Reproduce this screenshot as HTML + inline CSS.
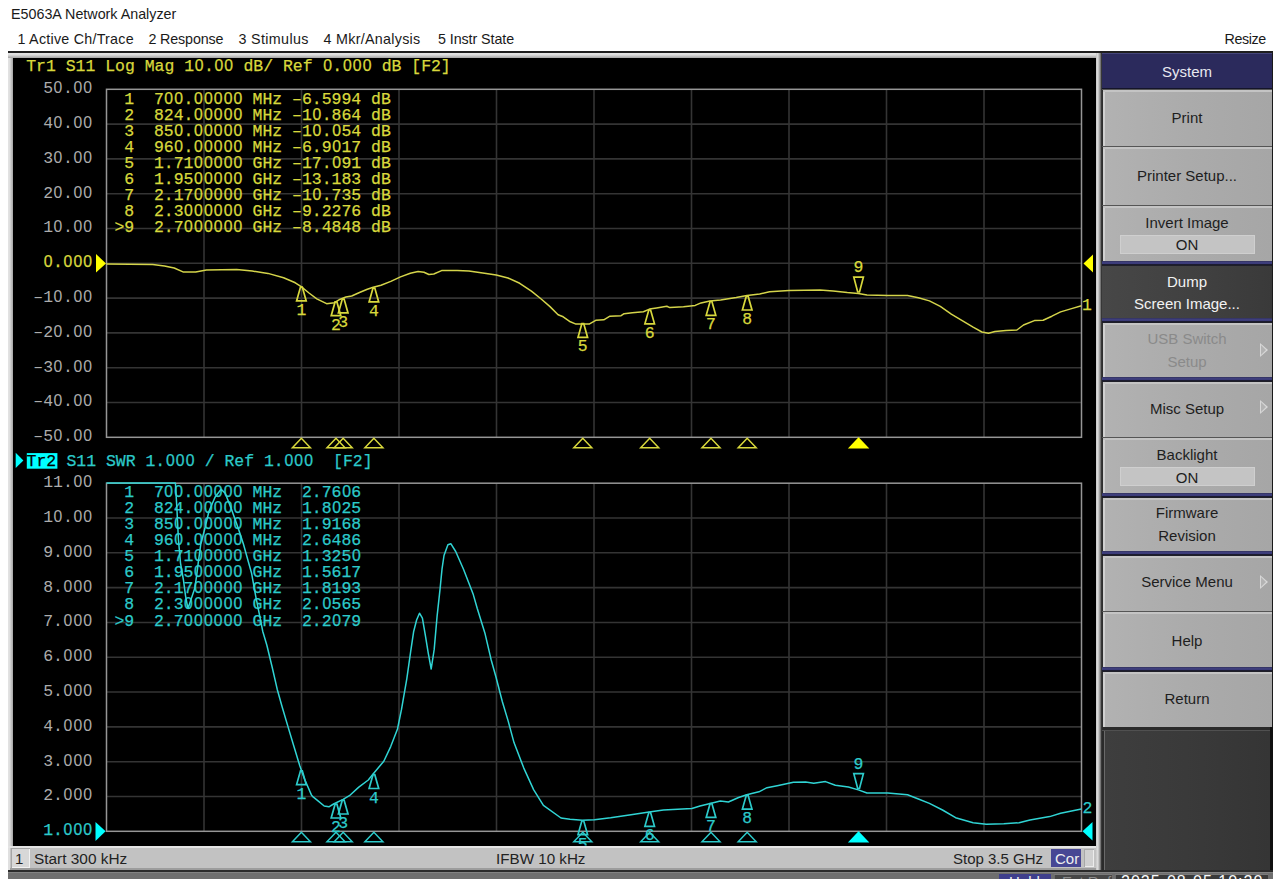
<!DOCTYPE html>
<html><head><meta charset="utf-8">
<style>
html,body{margin:0;padding:0;background:#fff;width:1280px;height:889px;overflow:hidden;position:relative;font-family:"Liberation Sans",sans-serif;}
.t{position:absolute;white-space:pre;line-height:1;color:#222;}
.sk{position:absolute;left:1102px;width:170px;background:linear-gradient(90deg,#b2b2b2 0%,#ababab 50%,#a6a6a6 100%);box-shadow:inset 1px 0 0 #2e2e2e,inset 0 2px 0 #c4c4c4,inset 3px 0 0 #d0d0d0;}
.sk .l{position:absolute;left:0;width:170px;text-align:center;font-size:15px;line-height:1;color:#1e1e1e;white-space:pre;}
.sep{position:absolute;left:1102px;width:170px;height:5px;background:linear-gradient(180deg,#2c2c50 0%,#40407e 20%,#3a3a78 55%,#1c1c30 70%,#202024 100%);}
.dk{position:absolute;left:1102px;width:170px;height:1px;background:#555;}
.fld{position:absolute;left:18px;width:135px;height:19px;background:#c4c4c4;box-shadow:inset 0 0 0 1px #cfcfcf;}
.arr{position:absolute;left:158px;width:0;height:0;border-top:7px solid transparent;border-bottom:7px solid transparent;border-left:8px solid #d8d8d8;}
.arr:after{content:"";position:absolute;left:-7px;top:-5px;border-top:5px solid transparent;border-bottom:5px solid transparent;border-left:5.5px solid #b3b3b3;}
</style></head><body>
<!-- title + menu -->
<div class="t" style="left:11px;top:6.5px;font-size:14.3px;color:#1a1a1a">E5063A Network Analyzer</div>
<div class="t" style="left:17.5px;top:32px;font-size:14.3px;letter-spacing:0.24px;color:#1a1a1a">1 Active Ch/Trace</div>
<div class="t" style="left:148.5px;top:32px;font-size:14.3px;letter-spacing:-0.15px;color:#1a1a1a">2 Response</div>
<div class="t" style="left:238.5px;top:32px;font-size:14.3px;letter-spacing:0.35px;color:#1a1a1a">3 Stimulus</div>
<div class="t" style="left:323.5px;top:32px;font-size:14.3px;letter-spacing:0.29px;color:#1a1a1a">4 Mkr/Analysis</div>
<div class="t" style="left:438px;top:32px;font-size:14.3px;letter-spacing:-0.08px;color:#1a1a1a">5 Instr State</div>
<div class="t" style="left:1224.5px;top:32px;font-size:14.3px;letter-spacing:-0.4px;color:#1a1a1a">Resize</div>

<!-- main frame -->
<div style="position:absolute;left:8px;top:51px;width:1265px;height:2px;background:#1e1e1e"></div>
<div style="position:absolute;left:8px;top:53px;width:1094px;height:817px;background:#d6d6d6"></div>
<div style="position:absolute;left:8px;top:53px;width:5px;height:793px;background:linear-gradient(90deg,#e4e4e4,#dedede 35%,#a4a4a4 100%)"></div>
<div style="position:absolute;left:8px;top:53px;width:1088px;height:5px;background:linear-gradient(180deg,#e4e4e4,#dedede 35%,#a4a4a4 100%)"></div>
<div style="position:absolute;left:1096px;top:53px;width:6px;height:817px;background:linear-gradient(90deg,#c8c8c8,#dcdcdc 30%,#8a8a8a 70%,#2a2a2a 95%)"></div>
<div style="position:absolute;left:1272px;top:53px;width:1px;height:826px;background:#1a1a1a"></div>

<!-- status bar -->
<div style="position:absolute;left:8px;top:846px;width:1088px;height:24px;background:#c2c2c2;box-shadow:inset 0 2px 0 #e4e4e4,inset 2px 0 0 #e0e0e0,inset 0 -2px 0 #9c9c9c"></div>
<div style="position:absolute;left:10.5px;top:848px;width:19px;height:19.5px;background:#d8d8d8;box-shadow:inset 1px 1px 0 #a6a6a6,inset -1px -1px 0 #f2f2f2"></div>
<div class="t" style="left:15px;top:851px;font-size:15px;color:#222">1</div>
<div class="t" style="left:34px;top:851px;font-size:15.4px;color:#222">Start 300 kHz</div>
<div class="t" style="left:496px;top:851px;font-size:15.2px;color:#222">IFBW 10 kHz</div>
<div class="t" style="left:953px;top:851px;font-size:15px;color:#222">Stop 3.5 GHz</div>
<div style="position:absolute;left:1051px;top:849px;width:30px;height:18px;background:#474794"></div>
<div class="t" style="left:1055px;top:851px;font-size:15px;color:#f0f0f0">Cor</div>
<div style="position:absolute;left:1084px;top:849px;width:10px;height:18px;background:#d0d0d0;box-shadow:inset 1px 1px 0 #a8a8a8,inset -1px -1px 0 #ececec"></div>
<div style="position:absolute;left:8px;top:870px;width:1265px;height:2px;background:#2a2a2a"></div>
<div style="position:absolute;left:8px;top:872px;width:1265px;height:7px;background:#6e6e6e;box-shadow:inset 0 1px 0 #828282"></div>
<div style="position:absolute;left:999px;top:874px;width:52px;height:5px;background:#3f3f8c;overflow:hidden"><div class="t" style="left:10px;top:0px;font-size:15px;color:#f0f0f0">Hold</div></div>
<div style="position:absolute;left:1054px;top:874px;width:58px;height:5px;background:#474747;box-shadow:inset 0 1px 0 #7a7a7a,inset 1px 0 0 #6a6a6a;overflow:hidden"><div class="t" style="left:8px;top:0px;font-size:15px;color:#8c8c8c">Ext Ref</div></div>
<div style="position:absolute;left:1115px;top:874px;width:153px;height:5px;background:#3a3a3a;box-shadow:inset 0 1px 0 #7a7a7a,inset 1px 0 0 #6a6a6a;overflow:hidden"><div class="t" style="left:6px;top:0px;font-size:16px;color:#fafafa;letter-spacing:1px">2025-08-05 10:20</div></div>
<!-- black screen -->
<div id="scr" style="position:absolute;left:13px;top:58px;width:1083px;height:787.5px;background:#000"></div>

<!-- softkeys -->
<div style="position:absolute;left:1102px;top:53px;width:170px;height:36px;background:#2b2a5c;box-shadow:inset 0 1px 0 #45457a,inset 0 -1px 0 #14142a"><div class="t" style="left:0;width:170px;text-align:center;top:10.5px;font-size:15px;color:#e8e8f0">System</div></div>
<div class="dk" style="top:89px"></div>
<div class="sk" style="top:90px;height:56px"><div class="l" style="top:20px">Print</div></div>
<div class="dk" style="top:146px"></div>
<div class="sk" style="top:147px;height:58px"><div class="l" style="top:21px">Printer Setup...</div></div>
<div class="dk" style="top:205px"></div>
<div class="sk" style="top:206px;height:56px"><div class="l" style="top:9px">Invert Image</div><div class="fld" style="top:29px"></div><div class="l" style="top:31px">ON</div></div>
<div class="sep" style="top:261px"></div>
<div class="sk" style="top:266px;height:53px;background:linear-gradient(90deg,#474747,#404040 60%,#3a3a3a);box-shadow:none"><div class="l" style="top:7.5px;color:#f2f2f2">Dump</div><div class="l" style="top:29.5px;color:#f2f2f2">Screen Image...</div></div>
<div class="sep" style="top:318px"></div>
<div class="sk" style="top:323px;height:54px"><div class="l" style="top:8px;color:#8a8a8a">USB Switch</div><div class="l" style="top:30.5px;color:#8a8a8a">Setup</div><div class="arr" style="top:20px"></div></div>
<div class="sep" style="top:377px"></div>
<div class="sk" style="top:382px;height:55px"><div class="l" style="top:18.5px">Misc Setup</div><div class="arr" style="top:18px"></div></div>
<div class="dk" style="top:437px"></div>
<div class="sk" style="top:438px;height:55px"><div class="l" style="top:8.7px">Backlight</div><div class="fld" style="top:29px"></div><div class="l" style="top:31.7px">ON</div></div>
<div class="sep" style="top:493px"></div>
<div class="sk" style="top:498px;height:53px"><div class="l" style="top:7px">Firmware</div><div class="l" style="top:29.5px">Revision</div></div>
<div class="sep" style="top:551px"></div>
<div class="sk" style="top:556px;height:55px"><div class="l" style="top:17.7px">Service Menu</div><div class="arr" style="top:19px"></div></div>
<div class="dk" style="top:611px"></div>
<div class="sk" style="top:612px;height:55px"><div class="l" style="top:21px">Help</div></div>
<div class="sep" style="top:667px"></div>
<div class="sk" style="top:672px;height:55px"><div class="l" style="top:19px">Return</div></div>
<div style="position:absolute;left:1102px;top:727px;width:168px;height:143px;background:linear-gradient(90deg,#3e3e3e,#3a3a3a 50%,#353535);box-shadow:inset 0 3px 0 #2a2a2a,inset 0 4px 0 #505050,inset 2px 0 0 #2a2a2a,inset 3px 0 0 #6a6a6a"></div>
<div style="position:absolute;left:1270px;top:727px;width:3px;height:143px;background:#101010"></div>

<!-- PLOT -->
<svg id="plot" style="position:absolute;left:0;top:0" width="1280" height="889" viewBox="0 0 1280 889">
<defs><clipPath id="pc"><rect x="13" y="58" width="1083" height="787.5"/></clipPath></defs><g clip-path="url(#pc)"><line x1="204.00" y1="89.3" x2="204.00" y2="437.3" stroke="#343434" stroke-width="1.6"/>
<line x1="301.50" y1="89.3" x2="301.50" y2="437.3" stroke="#343434" stroke-width="1.6"/>
<line x1="399.00" y1="89.3" x2="399.00" y2="437.3" stroke="#343434" stroke-width="1.6"/>
<line x1="496.50" y1="89.3" x2="496.50" y2="437.3" stroke="#343434" stroke-width="1.6"/>
<line x1="594.00" y1="89.3" x2="594.00" y2="437.3" stroke="#343434" stroke-width="1.6"/>
<line x1="691.50" y1="89.3" x2="691.50" y2="437.3" stroke="#343434" stroke-width="1.6"/>
<line x1="789.00" y1="89.3" x2="789.00" y2="437.3" stroke="#343434" stroke-width="1.6"/>
<line x1="886.50" y1="89.3" x2="886.50" y2="437.3" stroke="#343434" stroke-width="1.6"/>
<line x1="984.00" y1="89.3" x2="984.00" y2="437.3" stroke="#343434" stroke-width="1.6"/>
<line x1="106.5" y1="124.10" x2="1081.5" y2="124.10" stroke="#343434" stroke-width="1.6"/>
<line x1="106.5" y1="158.90" x2="1081.5" y2="158.90" stroke="#343434" stroke-width="1.6"/>
<line x1="106.5" y1="193.70" x2="1081.5" y2="193.70" stroke="#343434" stroke-width="1.6"/>
<line x1="106.5" y1="228.50" x2="1081.5" y2="228.50" stroke="#343434" stroke-width="1.6"/>
<line x1="106.5" y1="263.30" x2="1081.5" y2="263.30" stroke="#343434" stroke-width="1.6"/>
<line x1="106.5" y1="298.10" x2="1081.5" y2="298.10" stroke="#343434" stroke-width="1.6"/>
<line x1="106.5" y1="332.90" x2="1081.5" y2="332.90" stroke="#343434" stroke-width="1.6"/>
<line x1="106.5" y1="367.70" x2="1081.5" y2="367.70" stroke="#343434" stroke-width="1.6"/>
<line x1="106.5" y1="402.50" x2="1081.5" y2="402.50" stroke="#343434" stroke-width="1.6"/>
<rect x="106.5" y="89.3" width="975.0" height="348.0" fill="none" stroke="#969696" stroke-width="1.5"/>
<line x1="204.00" y1="483.2" x2="204.00" y2="831.3" stroke="#343434" stroke-width="1.6"/>
<line x1="301.50" y1="483.2" x2="301.50" y2="831.3" stroke="#343434" stroke-width="1.6"/>
<line x1="399.00" y1="483.2" x2="399.00" y2="831.3" stroke="#343434" stroke-width="1.6"/>
<line x1="496.50" y1="483.2" x2="496.50" y2="831.3" stroke="#343434" stroke-width="1.6"/>
<line x1="594.00" y1="483.2" x2="594.00" y2="831.3" stroke="#343434" stroke-width="1.6"/>
<line x1="691.50" y1="483.2" x2="691.50" y2="831.3" stroke="#343434" stroke-width="1.6"/>
<line x1="789.00" y1="483.2" x2="789.00" y2="831.3" stroke="#343434" stroke-width="1.6"/>
<line x1="886.50" y1="483.2" x2="886.50" y2="831.3" stroke="#343434" stroke-width="1.6"/>
<line x1="984.00" y1="483.2" x2="984.00" y2="831.3" stroke="#343434" stroke-width="1.6"/>
<line x1="106.5" y1="518.01" x2="1081.5" y2="518.01" stroke="#343434" stroke-width="1.6"/>
<line x1="106.5" y1="552.82" x2="1081.5" y2="552.82" stroke="#343434" stroke-width="1.6"/>
<line x1="106.5" y1="587.63" x2="1081.5" y2="587.63" stroke="#343434" stroke-width="1.6"/>
<line x1="106.5" y1="622.44" x2="1081.5" y2="622.44" stroke="#343434" stroke-width="1.6"/>
<line x1="106.5" y1="657.25" x2="1081.5" y2="657.25" stroke="#343434" stroke-width="1.6"/>
<line x1="106.5" y1="692.06" x2="1081.5" y2="692.06" stroke="#343434" stroke-width="1.6"/>
<line x1="106.5" y1="726.87" x2="1081.5" y2="726.87" stroke="#343434" stroke-width="1.6"/>
<line x1="106.5" y1="761.68" x2="1081.5" y2="761.68" stroke="#343434" stroke-width="1.6"/>
<line x1="106.5" y1="796.49" x2="1081.5" y2="796.49" stroke="#343434" stroke-width="1.6"/>
<rect x="106.5" y="483.2" width="975.0" height="348.09999999999997" fill="none" stroke="#969696" stroke-width="1.5"/>
<g font-family="Liberation Mono" font-size="16.47px" style="white-space:pre">
<text x="26.20" y="71.30" fill="#d8d83c" stroke="#d8d83c" stroke-width="0.25" >Tr1 S11 Log Mag 1 .   dB/ Ref  .    dB [F2]</text>
<text x="194.72 214.48 224.36 323.16 342.92 352.80 362.68" y="71.30" fill="#d8d83c" stroke="#d8d83c" stroke-width="0.25" font-family="Liberation Sans" font-size="15.75px">0000000</text>
<text x="43.18" y="93.20" fill="#acacac"  >5 .  </text>
<text x="53.62 73.38 83.26" y="93.20" fill="#acacac"  font-family="Liberation Sans" font-size="15.75px">000</text>
<text x="43.18" y="128.00" fill="#acacac"  >4 .  </text>
<text x="53.62 73.38 83.26" y="128.00" fill="#acacac"  font-family="Liberation Sans" font-size="15.75px">000</text>
<text x="43.18" y="162.80" fill="#acacac"  >3 .  </text>
<text x="53.62 73.38 83.26" y="162.80" fill="#acacac"  font-family="Liberation Sans" font-size="15.75px">000</text>
<text x="43.18" y="197.60" fill="#acacac"  >2 .  </text>
<text x="53.62 73.38 83.26" y="197.60" fill="#acacac"  font-family="Liberation Sans" font-size="15.75px">000</text>
<text x="43.18" y="232.40" fill="#acacac"  >1 .  </text>
<text x="53.62 73.38 83.26" y="232.40" fill="#acacac"  font-family="Liberation Sans" font-size="15.75px">000</text>
<text x="43.18" y="267.20" fill="#d8d83c" stroke="#d8d83c" stroke-width="0.25" > .   </text>
<text x="43.74 63.50 73.38 83.26" y="267.20" fill="#d8d83c" stroke="#d8d83c" stroke-width="0.25" font-family="Liberation Sans" font-size="15.75px">0000</text>
<text x="33.30" y="302.00" fill="#acacac"  >–1 .  </text>
<text x="53.62 73.38 83.26" y="302.00" fill="#acacac"  font-family="Liberation Sans" font-size="15.75px">000</text>
<text x="33.30" y="336.80" fill="#acacac"  >–2 .  </text>
<text x="53.62 73.38 83.26" y="336.80" fill="#acacac"  font-family="Liberation Sans" font-size="15.75px">000</text>
<text x="33.30" y="371.60" fill="#acacac"  >–3 .  </text>
<text x="53.62 73.38 83.26" y="371.60" fill="#acacac"  font-family="Liberation Sans" font-size="15.75px">000</text>
<text x="33.30" y="406.40" fill="#acacac"  >–4 .  </text>
<text x="53.62 73.38 83.26" y="406.40" fill="#acacac"  font-family="Liberation Sans" font-size="15.75px">000</text>
<text x="33.30" y="441.20" fill="#acacac"  >–5 .  </text>
<text x="53.62 73.38 83.26" y="441.20" fill="#acacac"  font-family="Liberation Sans" font-size="15.75px">000</text>
<text x="43.18" y="487.10" fill="#acacac"  >11.  </text>
<text x="73.38 83.26" y="487.10" fill="#acacac"  font-family="Liberation Sans" font-size="15.75px">00</text>
<text x="43.18" y="521.91" fill="#acacac"  >1 .  </text>
<text x="53.62 73.38 83.26" y="521.91" fill="#acacac"  font-family="Liberation Sans" font-size="15.75px">000</text>
<text x="43.18" y="556.72" fill="#acacac"  >9.   </text>
<text x="63.50 73.38 83.26" y="556.72" fill="#acacac"  font-family="Liberation Sans" font-size="15.75px">000</text>
<text x="43.18" y="591.53" fill="#acacac"  >8.   </text>
<text x="63.50 73.38 83.26" y="591.53" fill="#acacac"  font-family="Liberation Sans" font-size="15.75px">000</text>
<text x="43.18" y="626.34" fill="#acacac"  >7.   </text>
<text x="63.50 73.38 83.26" y="626.34" fill="#acacac"  font-family="Liberation Sans" font-size="15.75px">000</text>
<text x="43.18" y="661.15" fill="#acacac"  >6.   </text>
<text x="63.50 73.38 83.26" y="661.15" fill="#acacac"  font-family="Liberation Sans" font-size="15.75px">000</text>
<text x="43.18" y="695.96" fill="#acacac"  >5.   </text>
<text x="63.50 73.38 83.26" y="695.96" fill="#acacac"  font-family="Liberation Sans" font-size="15.75px">000</text>
<text x="43.18" y="730.77" fill="#acacac"  >4.   </text>
<text x="63.50 73.38 83.26" y="730.77" fill="#acacac"  font-family="Liberation Sans" font-size="15.75px">000</text>
<text x="43.18" y="765.58" fill="#acacac"  >3.   </text>
<text x="63.50 73.38 83.26" y="765.58" fill="#acacac"  font-family="Liberation Sans" font-size="15.75px">000</text>
<text x="43.18" y="800.39" fill="#acacac"  >2.   </text>
<text x="63.50 73.38 83.26" y="800.39" fill="#acacac"  font-family="Liberation Sans" font-size="15.75px">000</text>
<text x="43.18" y="835.20" fill="#2ccaca" stroke="#2ccaca" stroke-width="0.25" >1.   </text>
<text x="63.50 73.38 83.26" y="835.20" fill="#2ccaca" stroke="#2ccaca" stroke-width="0.25" font-family="Liberation Sans" font-size="15.75px">000</text>
<text x="114.40" y="103.60" fill="#d8d83c" stroke="#d8d83c" stroke-width="0.25" > 1  7  .      MHz –6.5994 dB</text>
<text x="164.36 174.24 194.00 203.88 213.76 223.64 233.52" y="103.60" fill="#d8d83c" stroke="#d8d83c" stroke-width="0.25" font-family="Liberation Sans" font-size="15.75px">0000000</text>
<text x="114.40" y="119.65" fill="#d8d83c" stroke="#d8d83c" stroke-width="0.25" > 2  824.      MHz –1 .864 dB</text>
<text x="194.00 203.88 213.76 223.64 233.52 312.56" y="119.65" fill="#d8d83c" stroke="#d8d83c" stroke-width="0.25" font-family="Liberation Sans" font-size="15.75px">000000</text>
<text x="114.40" y="135.70" fill="#d8d83c" stroke="#d8d83c" stroke-width="0.25" > 3  85 .      MHz –1 . 54 dB</text>
<text x="174.24 194.00 203.88 213.76 223.64 233.52 312.56 332.32" y="135.70" fill="#d8d83c" stroke="#d8d83c" stroke-width="0.25" font-family="Liberation Sans" font-size="15.75px">00000000</text>
<text x="114.40" y="151.75" fill="#d8d83c" stroke="#d8d83c" stroke-width="0.25" > 4  96 .      MHz –6.9 17 dB</text>
<text x="174.24 194.00 203.88 213.76 223.64 233.52 332.32" y="151.75" fill="#d8d83c" stroke="#d8d83c" stroke-width="0.25" font-family="Liberation Sans" font-size="15.75px">0000000</text>
<text x="114.40" y="167.80" fill="#d8d83c" stroke="#d8d83c" stroke-width="0.25" > 5  1.71      GHz –17. 91 dB</text>
<text x="194.00 203.88 213.76 223.64 233.52 332.32" y="167.80" fill="#d8d83c" stroke="#d8d83c" stroke-width="0.25" font-family="Liberation Sans" font-size="15.75px">000000</text>
<text x="114.40" y="183.85" fill="#d8d83c" stroke="#d8d83c" stroke-width="0.25" > 6  1.95      GHz –13.183 dB</text>
<text x="194.00 203.88 213.76 223.64 233.52" y="183.85" fill="#d8d83c" stroke="#d8d83c" stroke-width="0.25" font-family="Liberation Sans" font-size="15.75px">00000</text>
<text x="114.40" y="199.90" fill="#d8d83c" stroke="#d8d83c" stroke-width="0.25" > 7  2.17      GHz –1 .735 dB</text>
<text x="194.00 203.88 213.76 223.64 233.52 312.56" y="199.90" fill="#d8d83c" stroke="#d8d83c" stroke-width="0.25" font-family="Liberation Sans" font-size="15.75px">000000</text>
<text x="114.40" y="215.95" fill="#d8d83c" stroke="#d8d83c" stroke-width="0.25" > 8  2.3       GHz –9.2276 dB</text>
<text x="184.12 194.00 203.88 213.76 223.64 233.52" y="215.95" fill="#d8d83c" stroke="#d8d83c" stroke-width="0.25" font-family="Liberation Sans" font-size="15.75px">000000</text>
<text x="114.40" y="232.00" fill="#d8d83c" stroke="#d8d83c" stroke-width="0.25" >&gt;9  2.7       GHz –8.4848 dB</text>
<text x="184.12 194.00 203.88 213.76 223.64 233.52" y="232.00" fill="#d8d83c" stroke="#d8d83c" stroke-width="0.25" font-family="Liberation Sans" font-size="15.75px">000000</text>
<text x="114.40" y="497.10" fill="#2ccaca" stroke="#2ccaca" stroke-width="0.25" > 1  7  .      MHz  2.76 6</text>
<text x="164.36 174.24 194.00 203.88 213.76 223.64 233.52 342.20" y="497.10" fill="#2ccaca" stroke="#2ccaca" stroke-width="0.25" font-family="Liberation Sans" font-size="15.75px">00000000</text>
<text x="114.40" y="513.15" fill="#2ccaca" stroke="#2ccaca" stroke-width="0.25" > 2  824.      MHz  1.8 25</text>
<text x="194.00 203.88 213.76 223.64 233.52 332.32" y="513.15" fill="#2ccaca" stroke="#2ccaca" stroke-width="0.25" font-family="Liberation Sans" font-size="15.75px">000000</text>
<text x="114.40" y="529.20" fill="#2ccaca" stroke="#2ccaca" stroke-width="0.25" > 3  85 .      MHz  1.9168</text>
<text x="174.24 194.00 203.88 213.76 223.64 233.52" y="529.20" fill="#2ccaca" stroke="#2ccaca" stroke-width="0.25" font-family="Liberation Sans" font-size="15.75px">000000</text>
<text x="114.40" y="545.25" fill="#2ccaca" stroke="#2ccaca" stroke-width="0.25" > 4  96 .      MHz  2.6486</text>
<text x="174.24 194.00 203.88 213.76 223.64 233.52" y="545.25" fill="#2ccaca" stroke="#2ccaca" stroke-width="0.25" font-family="Liberation Sans" font-size="15.75px">000000</text>
<text x="114.40" y="561.30" fill="#2ccaca" stroke="#2ccaca" stroke-width="0.25" > 5  1.71      GHz  1.325 </text>
<text x="194.00 203.88 213.76 223.64 233.52 352.08" y="561.30" fill="#2ccaca" stroke="#2ccaca" stroke-width="0.25" font-family="Liberation Sans" font-size="15.75px">000000</text>
<text x="114.40" y="577.35" fill="#2ccaca" stroke="#2ccaca" stroke-width="0.25" > 6  1.95      GHz  1.5617</text>
<text x="194.00 203.88 213.76 223.64 233.52" y="577.35" fill="#2ccaca" stroke="#2ccaca" stroke-width="0.25" font-family="Liberation Sans" font-size="15.75px">00000</text>
<text x="114.40" y="593.40" fill="#2ccaca" stroke="#2ccaca" stroke-width="0.25" > 7  2.17      GHz  1.8193</text>
<text x="194.00 203.88 213.76 223.64 233.52" y="593.40" fill="#2ccaca" stroke="#2ccaca" stroke-width="0.25" font-family="Liberation Sans" font-size="15.75px">00000</text>
<text x="114.40" y="609.45" fill="#2ccaca" stroke="#2ccaca" stroke-width="0.25" > 8  2.3       GHz  2. 565</text>
<text x="184.12 194.00 203.88 213.76 223.64 233.52 322.44" y="609.45" fill="#2ccaca" stroke="#2ccaca" stroke-width="0.25" font-family="Liberation Sans" font-size="15.75px">0000000</text>
<text x="114.40" y="625.50" fill="#2ccaca" stroke="#2ccaca" stroke-width="0.25" >&gt;9  2.7       GHz  2.2 79</text>
<text x="184.12 194.00 203.88 213.76 223.64 233.52 332.32" y="625.50" fill="#2ccaca" stroke="#2ccaca" stroke-width="0.25" font-family="Liberation Sans" font-size="15.75px">0000000</text>
</g>
<polyline points="106.5,264.1 152.7,264.6 164.5,266.0 174.2,268.0 183.0,271.9 195.7,271.9 206.4,270.1 236.7,269.5 252.3,271.1 268.0,273.4 283.6,277.7 295.3,282.8 301.2,286.7 309.0,293.0 316.8,298.8 326.6,303.7 334.4,302.7 340.2,299.2 345.9,297.0 351.7,296.0 359.5,292.5 367.3,289.2 373.2,287.2 381.0,285.3 390.8,281.4 400.5,276.9 410.3,273.2 418.1,271.6 424.0,272.2 428.9,274.5 433.8,274.0 441.6,270.6 457.2,270.4 468.9,271.0 484.5,273.2 496.2,275.1 508.0,278.0 519.7,283.3 531.4,291.1 541.2,299.0 550.0,306.6 558.1,314.7 563.2,316.8 570.3,321.8 575.4,323.9 589.6,323.9 595.7,320.3 603.8,319.8 609.9,316.2 621.1,315.7 624.1,313.7 632.3,312.7 643.4,311.7 649.5,309.1 656.6,307.9 666.8,306.3 669.8,307.6 683.5,306.8 695.2,305.4 701.0,302.9 709.9,300.9 720.6,299.9 736.2,297.6 747.0,295.6 759.7,294.0 769.5,291.7 789.0,290.5 820.0,290.0 833.1,291.1 847.3,292.6 858.3,293.5 867.0,295.0 887.8,295.5 907.5,295.5 918.4,297.7 929.4,300.9 940.3,306.4 951.3,314.1 962.2,320.6 973.1,327.2 981.9,332.0 988.5,333.3 995.0,331.6 1006.0,330.5 1016.9,330.0 1023.5,325.0 1034.4,320.6 1043.1,320.2 1051.9,316.2 1060.6,311.9 1071.6,308.6 1081.4,305.8" fill="none" stroke="#d4d44a" stroke-width="1.5" stroke-linejoin="round"/>
<polyline points="106.5,483.1 175.4,483.1 176.9,508.5 178.4,539.0 180.5,563.1 183.5,580.4 185.5,595.6 187.6,606.8 188.3,607.5 191.6,597.7 194.7,588.5 196.7,575.3 198.2,563.1 200.8,544.0 204.8,528.8 208.9,511.5 215.0,497.3 221.1,489.2 225.2,493.2 231.2,508.5 238.4,528.8 243.4,544.0 248.5,562.3 251.6,573.3 255.6,595.6 259.7,615.9 262.7,631.2 266.8,645.0 272.3,667.7 277.2,689.2 282.1,706.8 287.9,726.4 293.8,746.0 299.7,765.5 304.6,779.2 311.4,794.9 313.1,796.9 317.1,800.1 324.2,806.0 328.9,806.8 333.6,804.0 343.1,799.3 349.4,795.7 358.8,787.1 368.3,780.0 373.1,774.0 383.8,761.2 390.7,746.6 397.5,729.0 401.5,709.4 406.8,678.8 410.7,651.4 413.6,631.8 416.6,620.0 419.5,613.2 422.4,618.1 425.4,635.7 428.3,653.3 431.2,669.0 434.2,649.4 437.1,616.1 440.1,588.7 442.0,569.2 444.0,555.5 447.9,544.7 450.8,543.7 455.7,551.5 463.5,569.2 473.3,594.6 477.2,608.3 485.1,633.8 491.0,659.2 495.9,676.8 502.3,701.5 508.2,721.1 514.0,742.6 523.8,768.1 533.6,789.6 543.4,805.3 561.0,818.0 570.0,819.2 582.2,820.2 594.4,819.8 610.6,817.8 631.0,814.8 649.2,812.1 663.4,810.1 691.9,808.5 700.0,806.0 710.2,803.4 720.3,801.0 728.4,802.0 738.6,797.5 746.7,794.8 758.9,791.8 767.0,787.7 777.2,785.7 793.4,782.2 805.6,782.0 813.8,783.3 825.5,781.6 835.3,785.3 848.4,787.0 858.3,789.9 867.0,793.0 887.8,793.0 907.5,794.7 918.4,799.0 929.4,803.4 942.5,810.0 955.6,817.7 973.1,822.7 986.3,824.2 1003.8,823.8 1019.1,822.7 1030.0,819.9 1049.7,816.6 1060.6,813.3 1081.4,808.9" fill="none" stroke="#30d4d4" stroke-width="1.5" stroke-linejoin="round"/>
<g font-family="Liberation Mono" font-size="16.47px">
<polygon points="300.5,287.1 302.3,287.1 306.2,300.9 296.6,300.9" fill="none" stroke="#d8d83c" stroke-width="1.7" stroke-linejoin="miter"/>
<polygon points="301.4,438.3 292.4,447.8 310.4,447.8" fill="none" stroke="#d8d83c" stroke-width="1.5"/>
<polygon points="335.1,301.9 336.9,301.9 340.8,315.7 331.2,315.7" fill="none" stroke="#d8d83c" stroke-width="1.7" stroke-linejoin="miter"/>
<polygon points="336.0,438.3 327.0,447.8 345.0,447.8" fill="none" stroke="#d8d83c" stroke-width="1.5"/>
<polygon points="342.3,299.1 344.1,299.1 348.0,312.9 338.4,312.9" fill="none" stroke="#d8d83c" stroke-width="1.7" stroke-linejoin="miter"/>
<polygon points="343.2,438.3 334.2,447.8 352.2,447.8" fill="none" stroke="#d8d83c" stroke-width="1.5"/>
<polygon points="373.0,288.1 374.8,288.1 378.7,301.9 369.1,301.9" fill="none" stroke="#d8d83c" stroke-width="1.7" stroke-linejoin="miter"/>
<polygon points="373.9,438.3 364.9,447.8 382.9,447.8" fill="none" stroke="#d8d83c" stroke-width="1.5"/>
<polygon points="581.9,323.6 583.7,323.6 587.6,337.4 578.0,337.4" fill="none" stroke="#d8d83c" stroke-width="1.7" stroke-linejoin="miter"/>
<polygon points="582.8,438.3 573.8,447.8 591.8,447.8" fill="none" stroke="#d8d83c" stroke-width="1.5"/>
<polygon points="648.8,310.0 650.6,310.0 654.5,323.8 644.9,323.8" fill="none" stroke="#d8d83c" stroke-width="1.7" stroke-linejoin="miter"/>
<polygon points="649.7,438.3 640.7,447.8 658.7,447.8" fill="none" stroke="#d8d83c" stroke-width="1.5"/>
<polygon points="710.1,301.5 711.9,301.5 715.8,315.3 706.2,315.3" fill="none" stroke="#d8d83c" stroke-width="1.7" stroke-linejoin="miter"/>
<polygon points="711.0,438.3 702.0,447.8 720.0,447.8" fill="none" stroke="#d8d83c" stroke-width="1.5"/>
<polygon points="746.3,296.2 748.1,296.2 752.0,310.0 742.4,310.0" fill="none" stroke="#d8d83c" stroke-width="1.7" stroke-linejoin="miter"/>
<polygon points="747.2,438.3 738.2,447.8 756.2,447.8" fill="none" stroke="#d8d83c" stroke-width="1.5"/>
<polygon points="857.7,292.0 859.5,292.0 863.4,277.2 853.8,277.2" fill="none" stroke="#d8d83c" stroke-width="1.7" stroke-linejoin="miter"/>
<text x="853.62" y="272.33" fill="#d8d83c" stroke="#d8d83c" stroke-width="0.25" >9</text>
<polygon points="858.6,438.3 849.6,447.8 867.6,447.8" fill="#ffff00" stroke="#ffff00" stroke-width="1.5"/>
<polygon points="300.5,770.8 302.3,770.8 306.2,784.6 296.6,784.6" fill="none" stroke="#2ccaca" stroke-width="1.7" stroke-linejoin="miter"/>
<polygon points="301.4,832.3 292.4,841.8 310.4,841.8" fill="none" stroke="#2ccaca" stroke-width="1.5"/>
<polygon points="335.1,804.2 336.9,804.2 340.8,818.0 331.2,818.0" fill="none" stroke="#2ccaca" stroke-width="1.7" stroke-linejoin="miter"/>
<polygon points="336.0,832.3 327.0,841.8 345.0,841.8" fill="none" stroke="#2ccaca" stroke-width="1.5"/>
<polygon points="342.3,800.2 344.1,800.2 348.0,814.0 338.4,814.0" fill="none" stroke="#2ccaca" stroke-width="1.7" stroke-linejoin="miter"/>
<polygon points="343.2,832.3 334.2,841.8 352.2,841.8" fill="none" stroke="#2ccaca" stroke-width="1.5"/>
<polygon points="373.0,774.7 374.8,774.7 378.7,788.5 369.1,788.5" fill="none" stroke="#2ccaca" stroke-width="1.7" stroke-linejoin="miter"/>
<polygon points="373.9,832.3 364.9,841.8 382.9,841.8" fill="none" stroke="#2ccaca" stroke-width="1.5"/>
<polygon points="581.9,820.8 583.7,820.8 587.6,834.6 578.0,834.6" fill="none" stroke="#2ccaca" stroke-width="1.7" stroke-linejoin="miter"/>
<polygon points="582.8,832.3 573.8,841.8 591.8,841.8" fill="none" stroke="#2ccaca" stroke-width="1.5"/>
<polygon points="648.8,812.5 650.6,812.5 654.5,826.3 644.9,826.3" fill="none" stroke="#2ccaca" stroke-width="1.7" stroke-linejoin="miter"/>
<polygon points="649.7,832.3 640.7,841.8 658.7,841.8" fill="none" stroke="#2ccaca" stroke-width="1.5"/>
<polygon points="710.1,803.6 711.9,803.6 715.8,817.4 706.2,817.4" fill="none" stroke="#2ccaca" stroke-width="1.7" stroke-linejoin="miter"/>
<polygon points="711.0,832.3 702.0,841.8 720.0,841.8" fill="none" stroke="#2ccaca" stroke-width="1.5"/>
<polygon points="746.3,795.3 748.1,795.3 752.0,809.1 742.4,809.1" fill="none" stroke="#2ccaca" stroke-width="1.7" stroke-linejoin="miter"/>
<polygon points="747.2,832.3 738.2,841.8 756.2,841.8" fill="none" stroke="#2ccaca" stroke-width="1.5"/>
<polygon points="857.7,788.5 859.5,788.5 863.4,773.7 853.8,773.7" fill="none" stroke="#2ccaca" stroke-width="1.7" stroke-linejoin="miter"/>
<text x="853.62" y="768.75" fill="#2ccaca" stroke="#2ccaca" stroke-width="0.25" >9</text>
<polygon points="858.6,832.3 849.6,841.8 867.6,841.8" fill="#00ffff" stroke="#00ffff" stroke-width="1.5"/>
<text x="296.49" y="314.87" fill="#d8d83c" stroke="#d8d83c" stroke-width="0.25" >1</text>
<text x="331.04" y="329.71" fill="#d8d83c" stroke="#d8d83c" stroke-width="0.25" >2</text>
<text x="338.28" y="326.89" fill="#d8d83c" stroke="#d8d83c" stroke-width="0.25" >3</text>
<text x="368.93" y="315.92" fill="#d8d83c" stroke="#d8d83c" stroke-width="0.25" >4</text>
<text x="577.87" y="351.38" fill="#d8d83c" stroke="#d8d83c" stroke-width="0.25" >5</text>
<text x="644.74" y="337.78" fill="#d8d83c" stroke="#d8d83c" stroke-width="0.25" >6</text>
<text x="706.03" y="329.26" fill="#d8d83c" stroke="#d8d83c" stroke-width="0.25" >7</text>
<text x="742.25" y="324.01" fill="#d8d83c" stroke="#d8d83c" stroke-width="0.25" >8</text>
<text x="296.49" y="798.61" fill="#2ccaca" stroke="#2ccaca" stroke-width="0.25" >1</text>
<text x="331.04" y="831.96" fill="#2ccaca" stroke="#2ccaca" stroke-width="0.25" >2</text>
<text x="338.28" y="827.99" fill="#2ccaca" stroke="#2ccaca" stroke-width="0.25" >3</text>
<text x="368.93" y="802.51" fill="#2ccaca" stroke="#2ccaca" stroke-width="0.25" >4</text>
<text x="577.87" y="848.59" fill="#2ccaca" stroke="#2ccaca" stroke-width="0.25" >5</text>
<text x="644.74" y="840.35" fill="#2ccaca" stroke="#2ccaca" stroke-width="0.25" >6</text>
<text x="706.03" y="831.38" fill="#2ccaca" stroke="#2ccaca" stroke-width="0.25" >7</text>
<text x="742.25" y="823.12" fill="#2ccaca" stroke="#2ccaca" stroke-width="0.25" >8</text>
</g>
<polygon points="96,254 96,272.5 106,263.4" fill="#ffff00"/>
<polygon points="1093,254.5 1093,272.5 1083.5,263.4" fill="#ffff00"/>
<polygon points="95.5,822 95.5,841 105.6,831.3" fill="#00ffff"/>
<polygon points="1092.5,822 1092.5,840.6 1082.5,831.3" fill="#00ffff"/>
<g font-family="Liberation Mono" font-size="16.47px">
<text x="1082.00" y="309.70" fill="#d8d83c" stroke="#d8d83c" stroke-width="0.25" >1</text>
<text x="1082.50" y="812.50" fill="#2ccaca" stroke="#2ccaca" stroke-width="0.25" >2</text>
<polygon points="15.7,452.7 15.7,468 23.4,460.4" fill="#00ffff"/>
<rect x="26.8" y="453.1" width="30.6" height="15.6" fill="#00ffff"/>
<text x="26.60" y="465.70" fill="#000000" stroke="#000000" stroke-width="0.25" >Tr2</text>
<text x="27.00" y="465.70" fill="#2ccaca" stroke="#2ccaca" stroke-width="0.25" >    S11 SWR 1.    / Ref 1.     [F2]</text>
<text x="165.88 175.76 185.64 284.44 294.32 304.20" y="465.70" fill="#2ccaca" stroke="#2ccaca" stroke-width="0.25" font-family="Liberation Sans" font-size="15.75px">000000</text>
</g></g>
</svg>
</body></html>
